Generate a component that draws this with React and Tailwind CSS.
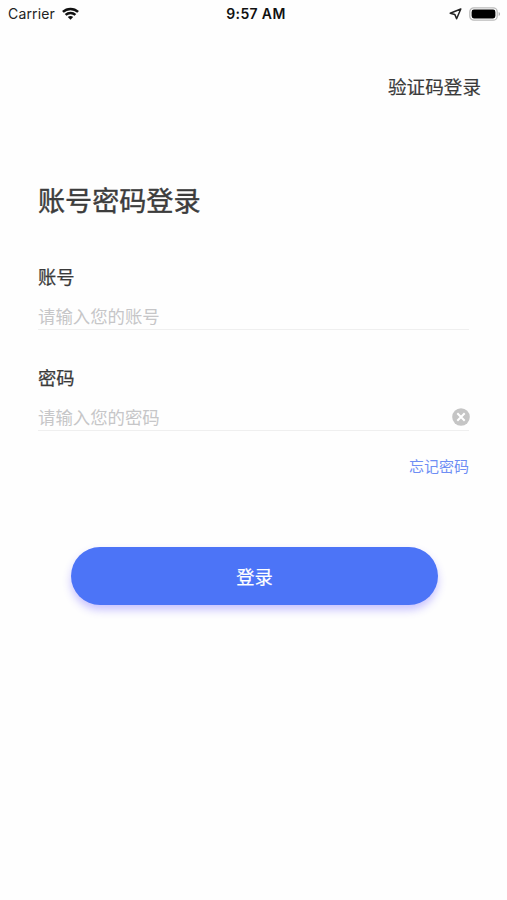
const cjk = "font-['Liberation_Sans','Noto_Sans_CJK_SC',sans-serif]";

function StatusBar() {
  return (
    <header className="grid h-7 grid-cols-3 items-center pr-[6px] pl-[8px] font-['Inter',sans-serif] text-[#222]">
      <div className="flex items-center gap-[7px]">
        <span className="text-[14px] leading-7 tracking-[0.15px]">Carrier</span>
        <svg className="-mt-[2px]" width="17" height="13" viewBox="0 0 17 13" fill="none" stroke="#111" strokeWidth="2.5">
          <path d="M.9 4.9C5.1.9 11.9.9 16.1 4.9" />
          <path d="M3.6 7.9c2.8-2.6 7-2.6 9.8 0" />
          <path d="M5.8 10c1.5-1.4 3.9-1.4 5.4 0L8.5 12.8z" fill="#111" stroke="none" />
        </svg>
      </div>
      <span className="pl-[3px] text-center text-[14px] leading-7 font-semibold tracking-[0.35px] whitespace-nowrap text-[#111]">9:57 AM</span>
      <div className="flex items-center justify-end gap-[7px]">
        <svg className="-mt-[1px]" width="13" height="12" viewBox="0 0 13 12" fill="none" stroke="#222" strokeWidth="1.5" strokeLinejoin="round">
          <path d="M11.8 1 1.2 5.3l4.6 1.1 1.8 4.4z" />
        </svg>
        <svg className="-mt-[1px]" width="32" height="14" viewBox="0 0 32 14">
          <rect x=".8" y=".8" width="27.4" height="12.4" rx="4" fill="#fff" stroke="#bbb" strokeWidth="1.3" />
          <rect x="2.6" y="2.6" width="23.8" height="8.8" rx="2.3" fill="#000" />
          <path d="M29.7 5v4c1.8-.6 1.8-3.4 0-4z" fill="#aaa" />
        </svg>
      </div>
    </header>
  );
}

function Field({ label, placeholder, clearable }) {
  return (
    <div className="h-[101px]">
      <label className="block h-6 text-[18.3px] leading-6 text-[#3a3a3a] [-webkit-text-stroke:0.25px_#3a3a3a]">{label}</label>
      <div className="mt-[3px] flex h-[37px] items-center justify-between border-b border-[#efefef] pt-[10px]">
        <span className="pt-[2px] text-[17.4px] leading-6 text-[#c6c6c8]">{placeholder}</span>
        {clearable && (
          <svg className="-mr-[1px]" width="18" height="18" viewBox="0 0 18 18">
            <circle cx="9" cy="9" r="8.8" fill="#c5c5c5" />
            <path d="m5.3 5.3 7.4 7.4m0-7.4-7.4 7.4" stroke="#fff" strokeWidth="2" />
          </svg>
        )}
      </div>
    </div>
  );
}

export default function App() {
  return (
    <div className="h-[900px] w-[507px] overflow-hidden bg-[#fefefe]">
      <StatusBar />
      <main className={`flex flex-col pr-[38px] pl-[38px] ${cjk}`}>
        <button className="mt-[48px] -mr-[12px] h-6 self-end text-[18.6px] leading-6 text-[#3a3a3a] [-webkit-text-stroke:0.2px_#3a3a3a]">验证码登录</button>
        <h1 className="mt-[82px] h-10 text-[27.1px] leading-10 text-[#3c3c3c] [-webkit-text-stroke:0.4px_#3c3c3c]">账号密码登录</h1>
        <div className="mt-[44px]">
          <Field label="账号" placeholder="请输入您的账号" />
          <Field label="密码" placeholder="请输入您的密码" clearable />
        </div>
        <button className="-mt-[13px] h-6 self-end text-[15px] leading-6 text-[#6f8ef4]">忘记密码</button>
        <button className="mt-[68px] ml-[33px] h-[58px] w-[367px] rounded-full bg-[#4c74f7] pt-[3px] text-[18.3px] text-white shadow-[0_5px_8px_rgba(90,70,255,0.32)] [-webkit-text-stroke:0.2px_white]">登录</button>
      </main>
    </div>
  );
}
